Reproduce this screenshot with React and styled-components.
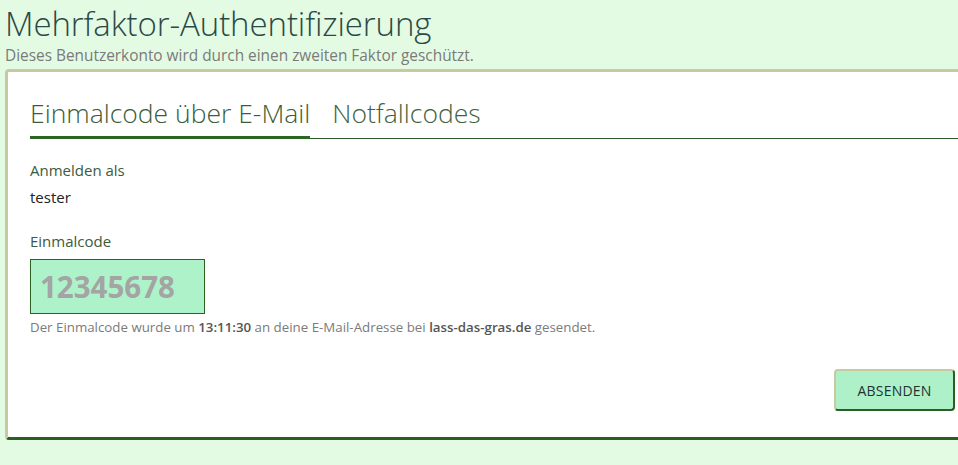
import React from 'react';
import styled, { createGlobalStyle } from 'styled-components';

const GlobalStyle = createGlobalStyle`
  html, body {
    margin: 0;
    padding: 0;
    background: #e3fbe2;
    overflow: hidden;
  }
  body {
    font-family: "Open Sans", "Noto Sans", sans-serif;
  }
`;

const Page = styled.div`
  padding: 2px 0 0 5px;
  width: 1000px;
`;

const Title = styled.h1`
  margin: 0;
  font-size: 33px;
  font-weight: 300;
  line-height: 44px;
  color: #2b4848;
  letter-spacing: -0.1px;
`;

const Subtitle = styled.p`
  margin: 0 0 3px;
  font-size: 15.4px;
  line-height: 20px;
  color: #7a7a7a;
`;

const Card = styled.section`
  background: #fff;
  border: 3px solid #c7c9a0;
  border-right: none;
  border-bottom-color: #2a5f21;
  border-radius: 4px 0 0 4px;
  padding: 23px 45px 23px 22px;
  height: 371px;
  box-sizing: border-box;
`;

const Tabs = styled.nav`
  display: flex;
  gap: 22px;
  border-bottom: 1px solid #2c5a26;
  margin-right: -45px;
`;

const Tab = styled.div`
  font-size: 26.5px;
  font-weight: 300;
  line-height: 34px;
  color: ${p => (p.$active ? '#3b5c3a' : '#3f623f')};
  padding: 1px 0 6px;
  margin-bottom: -1px;
  border-bottom: 3px solid ${p => (p.$active ? '#2c6424' : 'transparent')};
`;

const Field = styled.div`
  margin-top: ${p => p.$top || 0}px;
`;

const Label = styled.div`
  font-size: 15px;
  line-height: 20px;
  color: #3c5a3c;
`;

const Value = styled.div`
  font-size: 15px;
  line-height: 20px;
  color: #222;
  margin-top: 7px;
`;

const CodeInput = styled.input`
  display: block;
  margin-top: 8px;
  width: 175px;
  height: 55px;
  box-sizing: border-box;
  border: 1px solid #2b6322;
  background: #aef2c9;
  padding: 0 9px;
  font-family: "Open Sans", sans-serif;
  font-size: 29.5px;
  font-weight: 700;
  color: #a4a4a4;
  outline: none;
  &::placeholder {
    color: #a4a4a4;
    opacity: 1;
  }
`;

const Hint = styled.p`
  margin: 4px 0 0;
  font-size: 13.3px;
  line-height: 18px;
  color: #7b7b7b;
  b {
    color: #555;
    font-weight: 600;
  }
`;

const Actions = styled.div`
  display: flex;
  justify-content: flex-end;
  margin-top: 33px;
`;

const Button = styled.button`
  width: 121px;
  height: 42px;
  background: #aef0c8;
  border: 2px solid #c7c9a0;
  border-right-color: #2a5f21;
  border-bottom-color: #2a5f21;
  border-radius: 4px;
  font-family: "Open Sans", sans-serif;
  font-size: 14px;
  color: #233;
  letter-spacing: 0.2px;
  cursor: pointer;
`;

const Body = styled.div`
  width: 925px;
`;

export default function App() {
  return (
    <>
      <GlobalStyle />
      <Page>
        <Title>Mehrfaktor-Authentifizierung</Title>
        <Subtitle>Dieses Benutzerkonto wird durch einen zweiten Faktor geschützt.</Subtitle>
        <Card>
          <Tabs>
            <Tab $active>Einmalcode über E-Mail</Tab>
            <Tab>Notfallcodes</Tab>
          </Tabs>
          <Body>
            <Field $top={21}>
              <Label>Anmelden als</Label>
              <Value>tester</Value>
            </Field>
            <Field $top={24}>
              <Label>Einmalcode</Label>
              <CodeInput placeholder="12345678" />
              <Hint>
                Der Einmalcode wurde um <b>13:11:30</b> an deine E-Mail-Adresse bei{' '}
                <b>lass-das-gras.de</b> gesendet.
              </Hint>
            </Field>
            <Actions>
              <Button>ABSENDEN</Button>
            </Actions>
          </Body>
        </Card>
      </Page>
    </>
  );
}
